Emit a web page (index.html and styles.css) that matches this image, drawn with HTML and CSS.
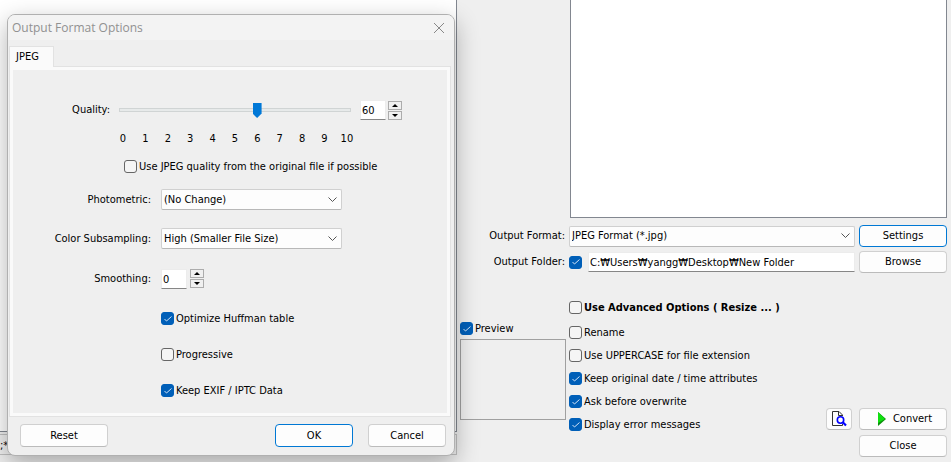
FILE: index.html
```html
<!DOCTYPE html>
<html lang="en">
<head>
    <meta charset="UTF-8">
    <meta name="viewport" content="width=device-width, initial-scale=1.0">
    <title>Batch Conversion</title>
    <link rel="stylesheet" href="styles.css">
</head>
<body>
    <main class="window">
        <section class="source">
            <div class="file-list"></div>
            <div class="file-types">;*</div>
        </section>

        <section class="output">
            <div class="input-list"></div>

            <div class="output-form">
                <label class="form-label" for="format">Output Format:</label>
                <select id="format">
                    <option>JPEG Format (*.jpg)</option>
                </select>
                <button type="button" class="primary">Settings</button>

                <label class="form-label" for="folder">Output Folder:</label>
                <div class="folder">
                    <input type="checkbox" aria-label="Use output folder" checked>
                    <input type="text" id="folder" value="C:₩Users₩yangg₩Desktop₩New Folder">
                </div>
                <button type="button">Browse</button>
            </div>

            <div class="options">
                <div class="preview">
                    <label class="check"><input type="checkbox" checked>Preview</label>
                    <div class="preview-box"></div>
                </div>

                <div class="checks">
                    <label class="check advanced"><input type="checkbox">Use Advanced Options ( Resize ... )</label>
                    <label class="check"><input type="checkbox">Rename</label>
                    <label class="check"><input type="checkbox">Use UPPERCASE for file extension</label>
                    <label class="check"><input type="checkbox" checked>Keep original date / time attributes</label>
                    <label class="check"><input type="checkbox" checked>Ask before overwrite</label>
                    <label class="check"><input type="checkbox" checked>Display error messages</label>
                </div>

                <div class="actions">
                    <button type="button" class="icon-button" aria-label="Preview output">
                        <svg width="16" height="16" viewBox="0 0 16 16" fill="none">
                            <path d="M11.5 13v1.5H1.5V.5H8L11.5 4v1M7.5 1v3.5H11" stroke="#333"/>
                            <circle cx="9.5" cy="9" r="3.2" stroke="#00f" stroke-width="1.6"/>
                            <path d="M11.8 11.3L15 14.5" stroke="#00f" stroke-width="2.2"/>
                        </svg>
                    </button>
                    <button type="button" class="convert">
                        <svg width="8" height="14" viewBox="0 0 8 14">
                            <path d="M0 0L8 7L0 14Z" fill="#0b8f0b"/>
                            <path d="M0 0L7 7L0 11Z" fill="#0fe00f"/>
                        </svg>
                        Convert
                    </button>
                    <button type="button" class="close-window">Close</button>
                </div>
            </div>
        </section>
    </main>

    <form class="dialog" role="dialog" aria-labelledby="dialogTitle">
        <div class="title-bar">
            <span id="dialogTitle">Output Format Options</span>
            <button type="button" class="close" aria-label="Close">
                <svg width="10" height="10" viewBox="0 0 10 10">
                    <path d="M0 0L10 10M10 0L0 10" stroke="#888"/>
                </svg>
            </button>
        </div>

        <div class="tabs">
            <button type="button" class="tab">JPEG</button>
        </div>

        <div class="panel">
            <div class="quality">
                <label class="form-label" for="quality">Quality:</label>
                <input type="range" id="quality" min="0" max="100" value="60">
                <input type="text" class="number" value="60" aria-label="Quality value">
                <div class="spinner">
                    <button type="button" aria-label="Increase quality"><i class="up"></i></button>
                    <button type="button" aria-label="Decrease quality"><i class="down"></i></button>
                </div>
            </div>
            <div class="scale">
                <span>0</span><span>1</span><span>2</span><span>3</span><span>4</span><span>5</span><span>6</span><span>7</span><span>8</span><span>9</span><span>10</span>
            </div>
            <label class="check original"><input type="checkbox">Use JPEG quality from the original file if possible</label>

            <div class="settings">
                <label class="form-label" for="photometric">Photometric:</label>
                <select id="photometric">
                    <option>(No Change)</option>
                </select>

                <label class="form-label" for="subsampling">Color Subsampling:</label>
                <select id="subsampling">
                    <option>High (Smaller File Size)</option>
                </select>

                <label class="form-label" for="smoothing">Smoothing:</label>
                <div class="stepper">
                    <input type="text" class="number" id="smoothing" value="0">
                    <div class="spinner">
                        <button type="button" aria-label="Increase smoothing"><i class="up"></i></button>
                        <button type="button" aria-label="Decrease smoothing"><i class="down"></i></button>
                    </div>
                </div>
            </div>

            <div class="jpeg-checks">
                <label class="check"><input type="checkbox" checked>Optimize Huffman table</label>
                <label class="check"><input type="checkbox">Progressive</label>
                <label class="check"><input type="checkbox" checked>Keep EXIF / IPTC Data</label>
            </div>
        </div>

        <div class="dialog-buttons">
            <button type="button" class="reset">Reset</button>
            <button type="button" class="primary">OK</button>
            <button type="button">Cancel</button>
        </div>
    </form>
</body>
</html>
```
FILE: styles.css
```css
* {
    box-sizing: border-box;
}

body {
    margin: 0;
    height: 100vh;
    overflow: hidden;
    background-color: #efefef;
    color: #000;
    font-family: Tahoma, "DejaVu Sans Condensed", "Noto Sans CJK KR", sans-serif;
    font-size: 11px;
    line-height: 16px;
}

button, input, select {
    margin: 0;
    font: inherit;
    color: inherit;
}

button {
    height: 22px;
    padding: 0;
    border: 1px solid #d0d0d0;
    border-bottom-color: #bbb;
    border-radius: 4px;
    background-color: #fdfdfd;
}

button.primary {
    border-color: #0078d4;
}

select {
    appearance: none;
    width: 100%;
    height: 21px;
    padding: 0 20px 0 2px;
    border: 1px solid #d0d0d0;
    border-bottom-color: #b8b8b8;
    border-radius: 2px;
    background: #fdfdfd url("data:image/svg+xml,%3Csvg xmlns='http://www.w3.org/2000/svg' width='9' height='6' fill='none' stroke='%23555'%3E%3Cpath d='M.5 .5l4 4l4-4'/%3E%3C/svg%3E") no-repeat right 4px center;
}

input[type="text"] {
    height: 20px;
    padding: 0 1px;
    border: 1px solid #ececec;
    border-bottom-color: #868686;
    background-color: #fff;
}

input[type="checkbox"] {
    appearance: none;
    flex: none;
    width: 13px;
    height: 13px;
    border: 1px solid #666;
    border-radius: 3px;
    background-color: #f5f5f5;
}

input[type="checkbox"]:checked {
    border-color: #005fb8;
    background: #005fb8 url("data:image/svg+xml,%3Csvg xmlns='http://www.w3.org/2000/svg' width='8' height='6' fill='none' stroke='%23cfe2f5'%3E%3Cpath d='M.5 3l2 2l5-4.5'/%3E%3C/svg%3E") no-repeat center;
}

.check {
    display: flex;
    align-items: center;
    gap: 2px;
    height: 23px;
    white-space: nowrap;
}

.form-label {
    text-align: right;
    white-space: nowrap;
}

/* main window */
.window {
    display: grid;
    grid-template-columns: 457fr 494fr;
    height: 100%;
}

.source {
    display: flex;
    flex-direction: column;
    padding-bottom: 7px;
}

.file-list {
    flex: 1;
    border-right: 1px solid #828790;
    border-bottom: 1px solid #828790;
    background-color: #fff;
}

.file-types {
    height: 21px;
    margin-top: 2px;
    padding-top: 3px;
    border: 1px solid #c0c0c0;
    border-left: none;
}

.output {
    display: flex;
    flex-direction: column;
    padding: 0 4px 5px 3px;
}

.input-list {
    flex: 1;
    margin-left: 110px;
    border: 1px solid #828790;
    border-top: none;
    background-color: #fff;
}

.output-form {
    display: grid;
    grid-template-columns: 105px 1fr 88px;
    align-items: center;
    gap: 4px;
    margin-top: 7px;
}

.folder {
    display: flex;
    align-items: center;
    gap: 6px;
}

.folder input[type="text"] {
    flex: 1;
    min-width: 0;
}

.options {
    display: grid;
    grid-template-columns: 106px 1fr auto;
    gap: 3px;
    margin-top: 23px;
}

.preview {
    margin-top: 22px;
}

.preview-box {
    height: 81px;
    border: 1px solid #a0a0a0;
}

.preview .check {
    height: 21px;
}

.checks {
    padding-bottom: 21px;
}

.advanced {
    margin-bottom: 2px;
    font-weight: bold;
}

.actions {
    display: grid;
    grid-template-columns: 26px 88px;
    align-content: end;
    gap: 5px 7px;
}

.icon-button, .convert {
    display: flex;
    align-items: center;
    justify-content: center;
}

.convert {
    gap: 7px;
    padding-left: 4px;
}

.close-window {
    grid-column: 2;
}

/* format dialog, floats above the main window */
.dialog {
    position: absolute;
    top: 14px;
    left: 7px;
    width: 448px;
    border: 1px solid #b0b0b0;
    border-radius: 8px;
    background-color: #efefef;
    box-shadow: 0 8px 24px rgba(0, 0, 0, 0.3);
    overflow: hidden;
}

.title-bar {
    display: flex;
    align-items: center;
    justify-content: space-between;
    height: 25px;
    padding: 0 10px 0 4px;
    background-color: #f3f3f3;
    color: #919191;
    font-family: "Open Sans", "Noto Sans", sans-serif;
    font-size: 12px;
}

.title-bar .close {
    display: flex;
    height: auto;
    border: none;
    background: none;
}

.tabs {
    display: flex;
    padding: 6px 1px 0;
}

.tab {
    z-index: 1;
    height: 21px;
    margin-bottom: -1px;
    padding: 0 14px 0 6px;
    border: 1px solid #e2e2e2;
    border-bottom: none;
    border-radius: 0;
    background-color: #fafafa;
}

.panel {
    margin: 0 3px 0 1px;
    padding: 33px 48px 14px 44px;
    border: 1px solid #e2e2e2;
    box-shadow: inset 0 0 0 3px #fafafa;
}

.quality {
    display: flex;
    align-items: center;
    gap: 9px;
}

.quality .form-label {
    width: 56px;
}

.quality .spinner {
    margin-left: -7px;
}

input[type="range"] {
    appearance: none;
    flex: 1;
    min-width: 0;
    height: 16px;
    background: none;
}

input[type="range"]::-webkit-slider-runnable-track {
    height: 4px;
    border: 1px solid #d0d4d4;
    background-color: #e7eaea;
}

input[type="range"]::-webkit-slider-thumb {
    appearance: none;
    width: 9px;
    height: 15px;
    margin-top: -6px;
    background-color: #0078d7;
    clip-path: polygon(0 0, 100% 0, 100% 70%, 50% 100%, 0 70%);
}

.number {
    width: 26px;
}

.spinner {
    display: flex;
    flex-direction: column;
    gap: 1px;
}

.spinner button {
    display: flex;
    align-items: center;
    justify-content: center;
    width: 14px;
    height: 9px;
    border: 1px solid #acacac;
    border-radius: 0;
    background-color: #f0f0f0;
}

.up, .down {
    border: 3px solid transparent;
}

.up {
    border-top: none;
    border-bottom-color: #000;
}

.down {
    border-bottom: none;
    border-top-color: #000;
}

.scale {
    display: flex;
    justify-content: space-between;
    margin: 11px 45px 0 59px;
}

.scale span {
    width: 20px;
    text-align: center;
}

.original {
    margin: 8px 0 0 70px;
}

.settings {
    display: grid;
    grid-template-columns: 97px 181px;
    align-items: center;
    gap: 18px 10px;
    margin-top: 11px;
}

.stepper {
    display: flex;
    gap: 3px;
    padding: 2px 0;
}

.jpeg-checks {
    display: flex;
    flex-direction: column;
    gap: 13px;
    margin: 16px 0 0 107px;
}

.dialog-buttons {
    display: flex;
    gap: 15px;
    padding: 7px 8px 8px 12px;
}

.dialog-buttons button {
    width: 78px;
    height: 23px;
}

.dialog-buttons .reset {
    width: 88px;
    margin-right: auto;
}
```
